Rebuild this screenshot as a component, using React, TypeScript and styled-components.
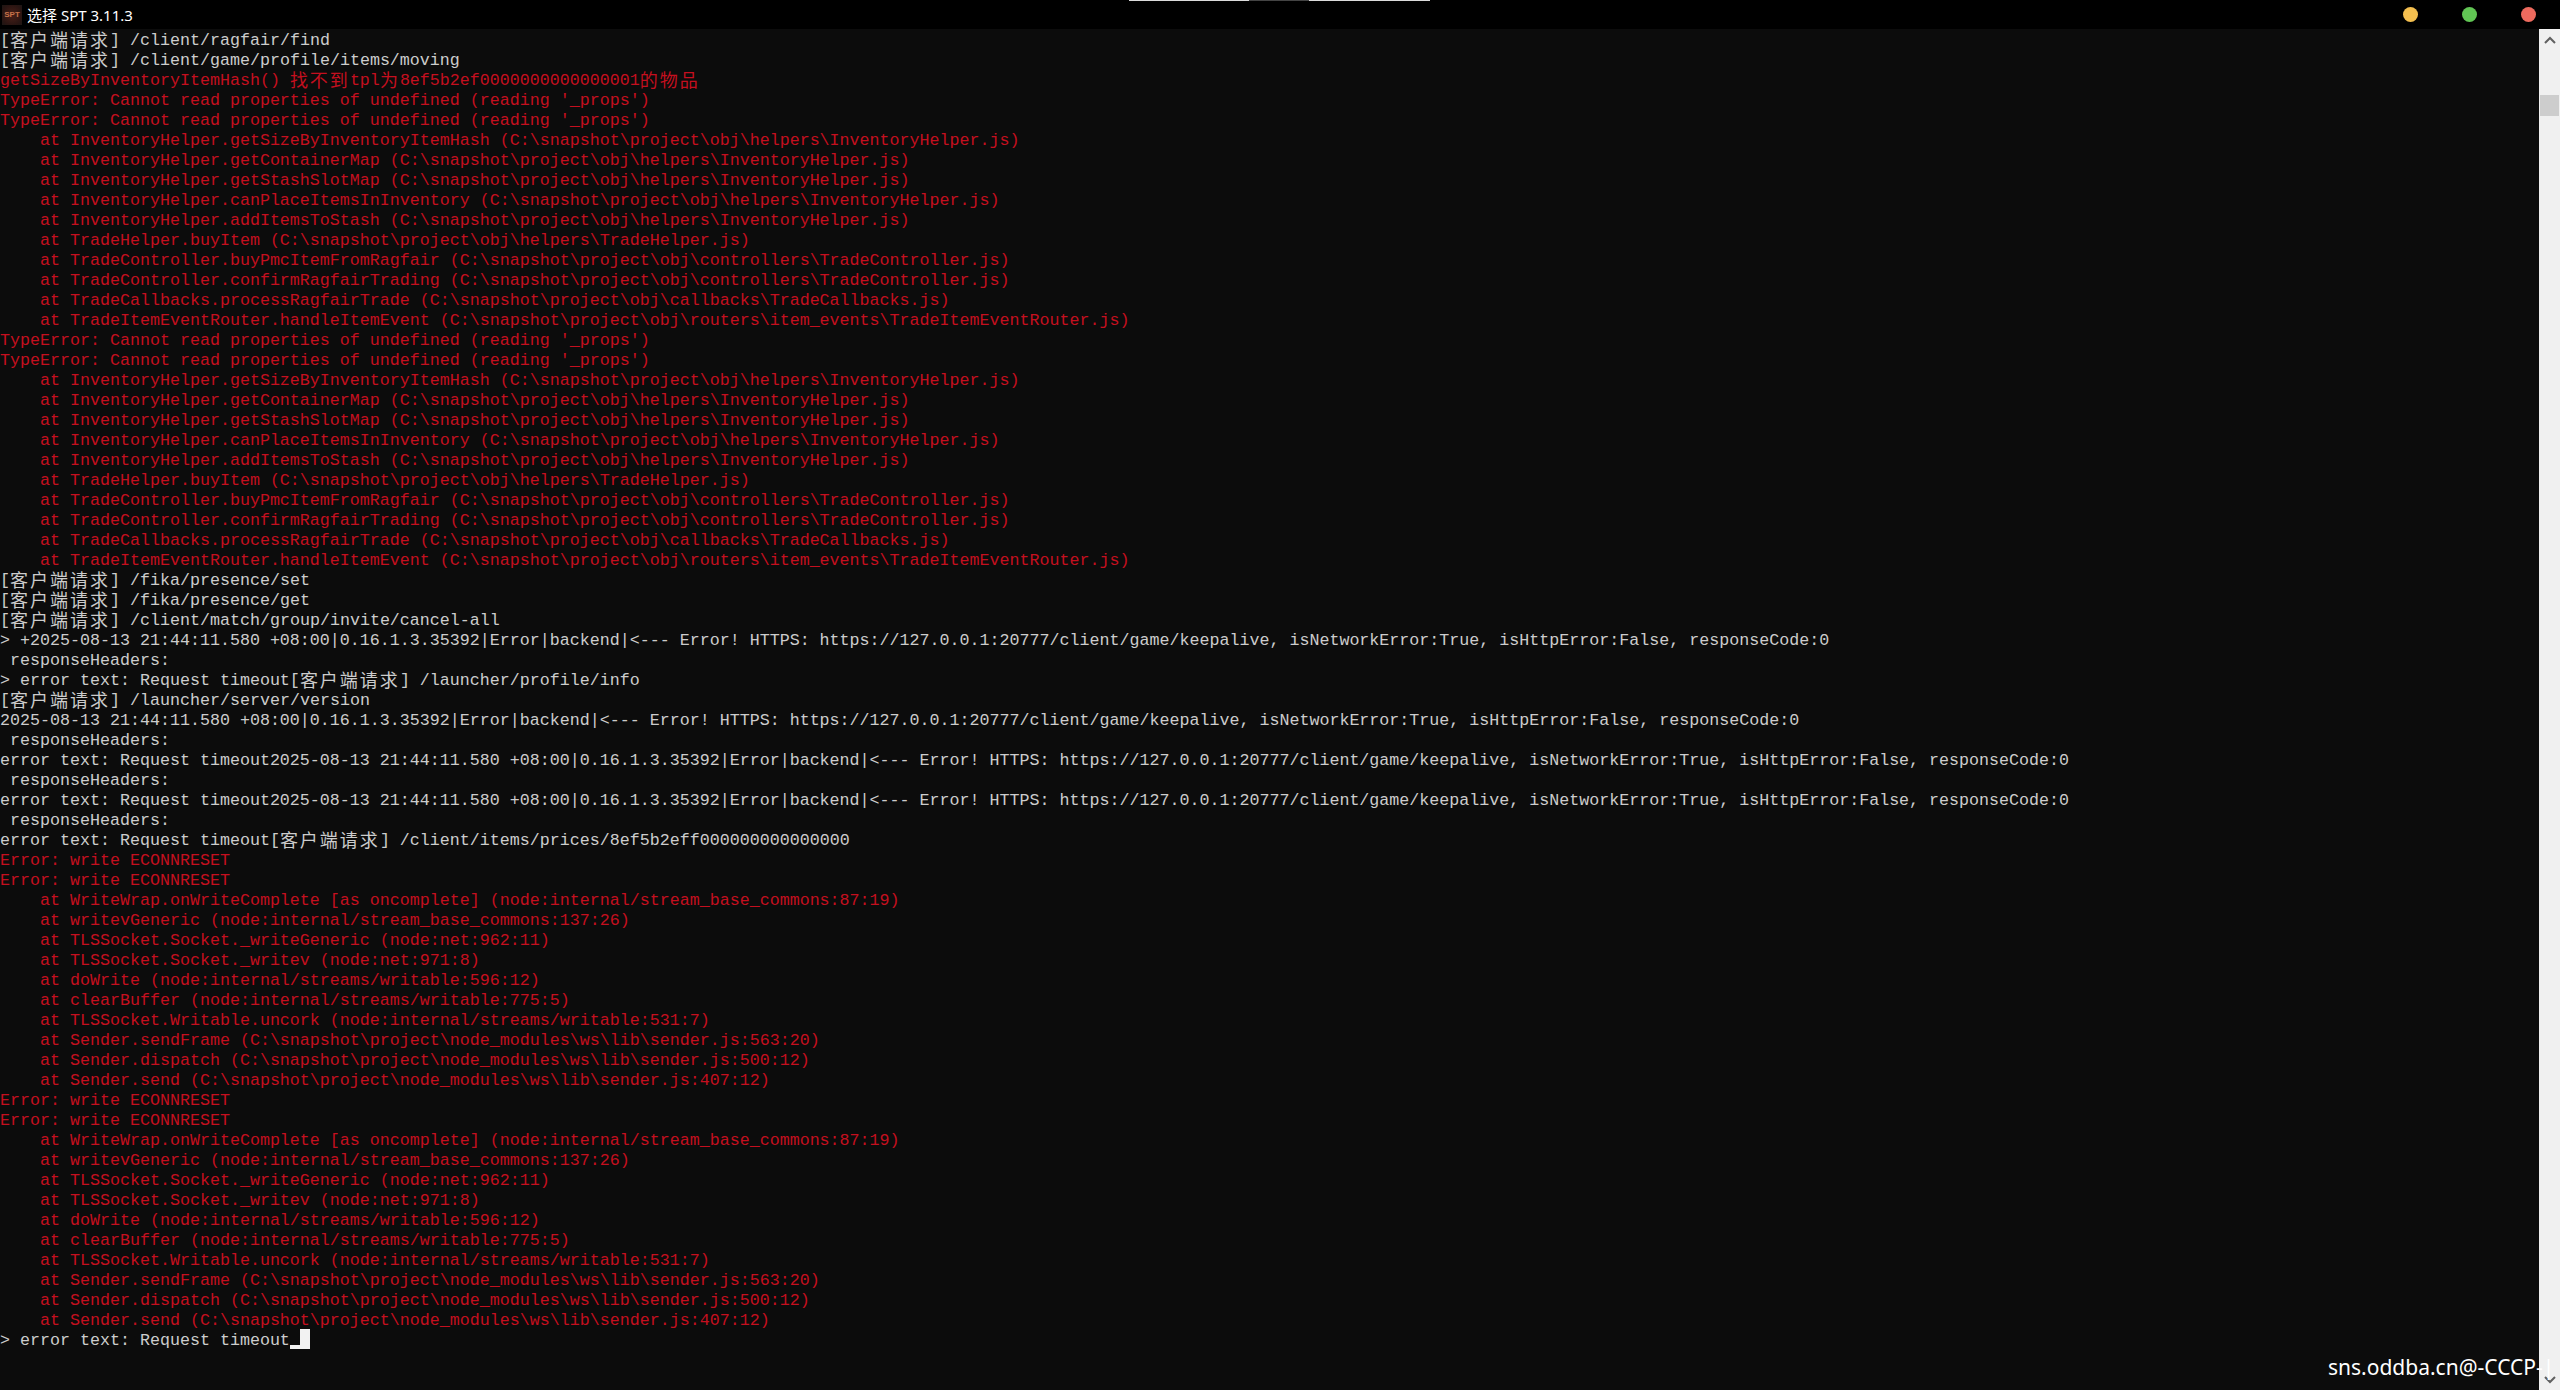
import React from "react";
import styled, { createGlobalStyle } from "styled-components";

const Global = createGlobalStyle`
  html, body { margin: 0; padding: 0; background: #0c0c0c; }
  #root { width: 2560px; height: 1390px; overflow: hidden; }
`;

const Window = styled.div`
  position: relative;
  width: 2560px;
  height: 1390px;
  display: flex;
  flex-direction: column;
  background: #0c0c0c;
  overflow: hidden;
`;

const TitleBar = styled.header`
  height: 29px;
  flex: none;
  display: flex;
  align-items: center;
  padding: 0 24px 0 2px;
  background: #000;
`;

const AppIcon = styled.div`
  width: 20px;
  height: 20px;
  display: flex;
  align-items: center;
  justify-content: center;
  background: radial-gradient(circle at 50% 50%, #4a2018 0%, #2a1512 70%, #1c1614 100%);
  color: #c8734a;
  font: 700 8px "Liberation Sans", sans-serif;
  letter-spacing: 0;
`;

const Title = styled.div`
  margin-left: 5px;
  color: #fff;
  font: 15px/20px "Noto Sans", "Noto Sans CJK SC", sans-serif;
  white-space: pre;
`;

const Lights = styled.div`
  margin-left: auto;
  display: flex;
  gap: 44px;
`;

const Light = styled.span<{ $color: string }>`
  width: 15px;
  height: 15px;
  border-radius: 50%;
  background: ${(p) => p.$color};
`;

const TopStripe = styled.div`
  position: absolute;
  top: 0;
  left: 1129px;
  display: flex;
  height: 1px;
`;

const StripeSegment = styled.span<{ $w: number; $color: string }>`
  width: ${(p) => p.$w}px;
  background: ${(p) => p.$color};
`;

const Body = styled.div`
  flex: 1;
  min-height: 0;
  display: flex;
`;

const Console = styled.main`
  flex: 1;
  min-width: 0;
  font-family: "Liberation Mono", monospace;
  font-size: 16.667px;
`;

const Row = styled.div<{ $red?: boolean }>`
  box-sizing: border-box;
  height: 20px;
  padding-top: 2px;
  line-height: 20px;
  white-space: pre;
  color: ${(p) => (p.$red ? "#c50f1f" : "#cccccc")};
`;

const Cjk = styled.span`
  display: inline-block;
  height: 18px;
  margin-top: -1px;
  vertical-align: top;
  font-family: "Noto Sans CJK SC", sans-serif;
  font-size: 18px;
  line-height: 18px;
  letter-spacing: 2px;
`;

const Cursor = styled.span`
  display: inline-block;
  width: 20px;
  height: 20px;
  margin-top: -2px;
  vertical-align: top;
  background:
    linear-gradient(#f2f2f2, #f2f2f2) right top / 10px 100% no-repeat,
    linear-gradient(#f2f2f2, #f2f2f2) left bottom / 10px 4px no-repeat;
`;

const ScrollBar = styled.aside`
  width: 21px;
  flex: none;
  display: flex;
  flex-direction: column;
  align-items: center;
  background: #f0f0f0;
`;

const ScrollArrow = styled.svg<{ $bottom?: boolean }>`
  flex: none;
  width: 12px;
  height: 8px;
  margin-top: ${(p) => (p.$bottom ? "auto" : "7px")};
  margin-bottom: ${(p) => (p.$bottom ? "6px" : "0")};
  fill: none;
  stroke: #606060;
  stroke-width: 2;
`;

const ScrollThumb = styled.div`
  flex: none;
  width: 19px;
  height: 21px;
  margin-top: 51px;
  background: #cdcdcd;
`;

const Watermark = styled.div`
  position: absolute;
  left: 2328px;
  top: 1353px;
  color: #fff;
  font: 21px/28px "Noto Sans", sans-serif;
  white-space: pre;
`;

type Line = { t: string; red?: boolean };

const req = (p: string): Line => ({ t: `[客户端请求] ${p}` });
const red = (t: string): Line => ({ t, red: true });

const typeErr = red("TypeError: Cannot read properties of undefined (reading '_props')");
const writeErr = red("Error: write ECONNRESET");

const keep =
  "2025-08-13 21:44:11.580 +08:00|0.16.1.3.35392|Error|backend|<--- Error! HTTPS: https://127.0.0.1:20777/client/game/keepalive, isNetworkError:True, isHttpError:False, responseCode:0";

const tradeStack: Line[] = [
  "InventoryHelper.getSizeByInventoryItemHash (C:\\snapshot\\project\\obj\\helpers\\InventoryHelper.js)",
  "InventoryHelper.getContainerMap (C:\\snapshot\\project\\obj\\helpers\\InventoryHelper.js)",
  "InventoryHelper.getStashSlotMap (C:\\snapshot\\project\\obj\\helpers\\InventoryHelper.js)",
  "InventoryHelper.canPlaceItemsInInventory (C:\\snapshot\\project\\obj\\helpers\\InventoryHelper.js)",
  "InventoryHelper.addItemsToStash (C:\\snapshot\\project\\obj\\helpers\\InventoryHelper.js)",
  "TradeHelper.buyItem (C:\\snapshot\\project\\obj\\helpers\\TradeHelper.js)",
  "TradeController.buyPmcItemFromRagfair (C:\\snapshot\\project\\obj\\controllers\\TradeController.js)",
  "TradeController.confirmRagfairTrading (C:\\snapshot\\project\\obj\\controllers\\TradeController.js)",
  "TradeCallbacks.processRagfairTrade (C:\\snapshot\\project\\obj\\callbacks\\TradeCallbacks.js)",
  "TradeItemEventRouter.handleItemEvent (C:\\snapshot\\project\\obj\\routers\\item_events\\TradeItemEventRouter.js)",
].map((s) => red(`    at ${s}`));

const socketStack: Line[] = [
  "WriteWrap.onWriteComplete [as oncomplete] (node:internal/stream_base_commons:87:19)",
  "writevGeneric (node:internal/stream_base_commons:137:26)",
  "TLSSocket.Socket._writeGeneric (node:net:962:11)",
  "TLSSocket.Socket._writev (node:net:971:8)",
  "doWrite (node:internal/streams/writable:596:12)",
  "clearBuffer (node:internal/streams/writable:775:5)",
  "TLSSocket.Writable.uncork (node:internal/streams/writable:531:7)",
  "Sender.sendFrame (C:\\snapshot\\project\\node_modules\\ws\\lib\\sender.js:563:20)",
  "Sender.dispatch (C:\\snapshot\\project\\node_modules\\ws\\lib\\sender.js:500:12)",
  "Sender.send (C:\\snapshot\\project\\node_modules\\ws\\lib\\sender.js:407:12)",
].map((s) => red(`    at ${s}`));

const headers: Line = { t: " responseHeaders:" };

const lines: Line[] = [
  req("/client/ragfair/find"),
  req("/client/game/profile/items/moving"),
  red("getSizeByInventoryItemHash() 找不到tpl为8ef5b2ef0000000000000001的物品"),
  typeErr,
  typeErr,
  ...tradeStack,
  typeErr,
  typeErr,
  ...tradeStack,
  req("/fika/presence/set"),
  req("/fika/presence/get"),
  req("/client/match/group/invite/cancel-all"),
  { t: `> +${keep}` },
  headers,
  { t: "> error text: Request timeout[客户端请求] /launcher/profile/info" },
  req("/launcher/server/version"),
  { t: keep },
  headers,
  { t: `error text: Request timeout${keep}` },
  headers,
  { t: `error text: Request timeout${keep}` },
  headers,
  { t: "error text: Request timeout[客户端请求] /client/items/prices/8ef5b2eff000000000000000" },
  writeErr,
  writeErr,
  ...socketStack,
  writeErr,
  writeErr,
  ...socketStack,
];

const renderText = (text: string) =>
  text.split(/([\u4e00-\u9fff]+)/).map((part, i) =>
    i % 2 === 1 ? <Cjk key={i}>{part}</Cjk> : part
  );

export default function App() {
  return (
    <Window>
      <Global />
      <TitleBar>
        <AppIcon>SPT</AppIcon>
        <Title>选择 SPT 3.11.3</Title>
        <Lights>
          <Light $color="#f4bf4f" />
          <Light $color="#61c554" />
          <Light $color="#ed6a5e" />
        </Lights>
      </TitleBar>
      <TopStripe>
        <StripeSegment $w={120} $color="#dcdcdc" />
        <StripeSegment $w={60} $color="#444444" />
        <StripeSegment $w={121} $color="#dcdcdc" />
      </TopStripe>
      <Body>
        <Console>
          {lines.map((l, i) => (
            <Row key={i} $red={l.red}>
              {renderText(l.t)}
            </Row>
          ))}
          <Row>
            {"> error text: Request timeout"}
            <Cursor />
          </Row>
        </Console>
        <ScrollBar>
          <ScrollArrow viewBox="0 0 12 8">
            <path d="M1 7 L6 2 L11 7" />
          </ScrollArrow>
          <ScrollThumb />
          <ScrollArrow $bottom viewBox="0 0 12 8">
            <path d="M1 1 L6 6 L11 1" />
          </ScrollArrow>
        </ScrollBar>
      </Body>
      <Watermark>sns.oddba.cn@-CCCP-|</Watermark>
    </Window>
  );
}
